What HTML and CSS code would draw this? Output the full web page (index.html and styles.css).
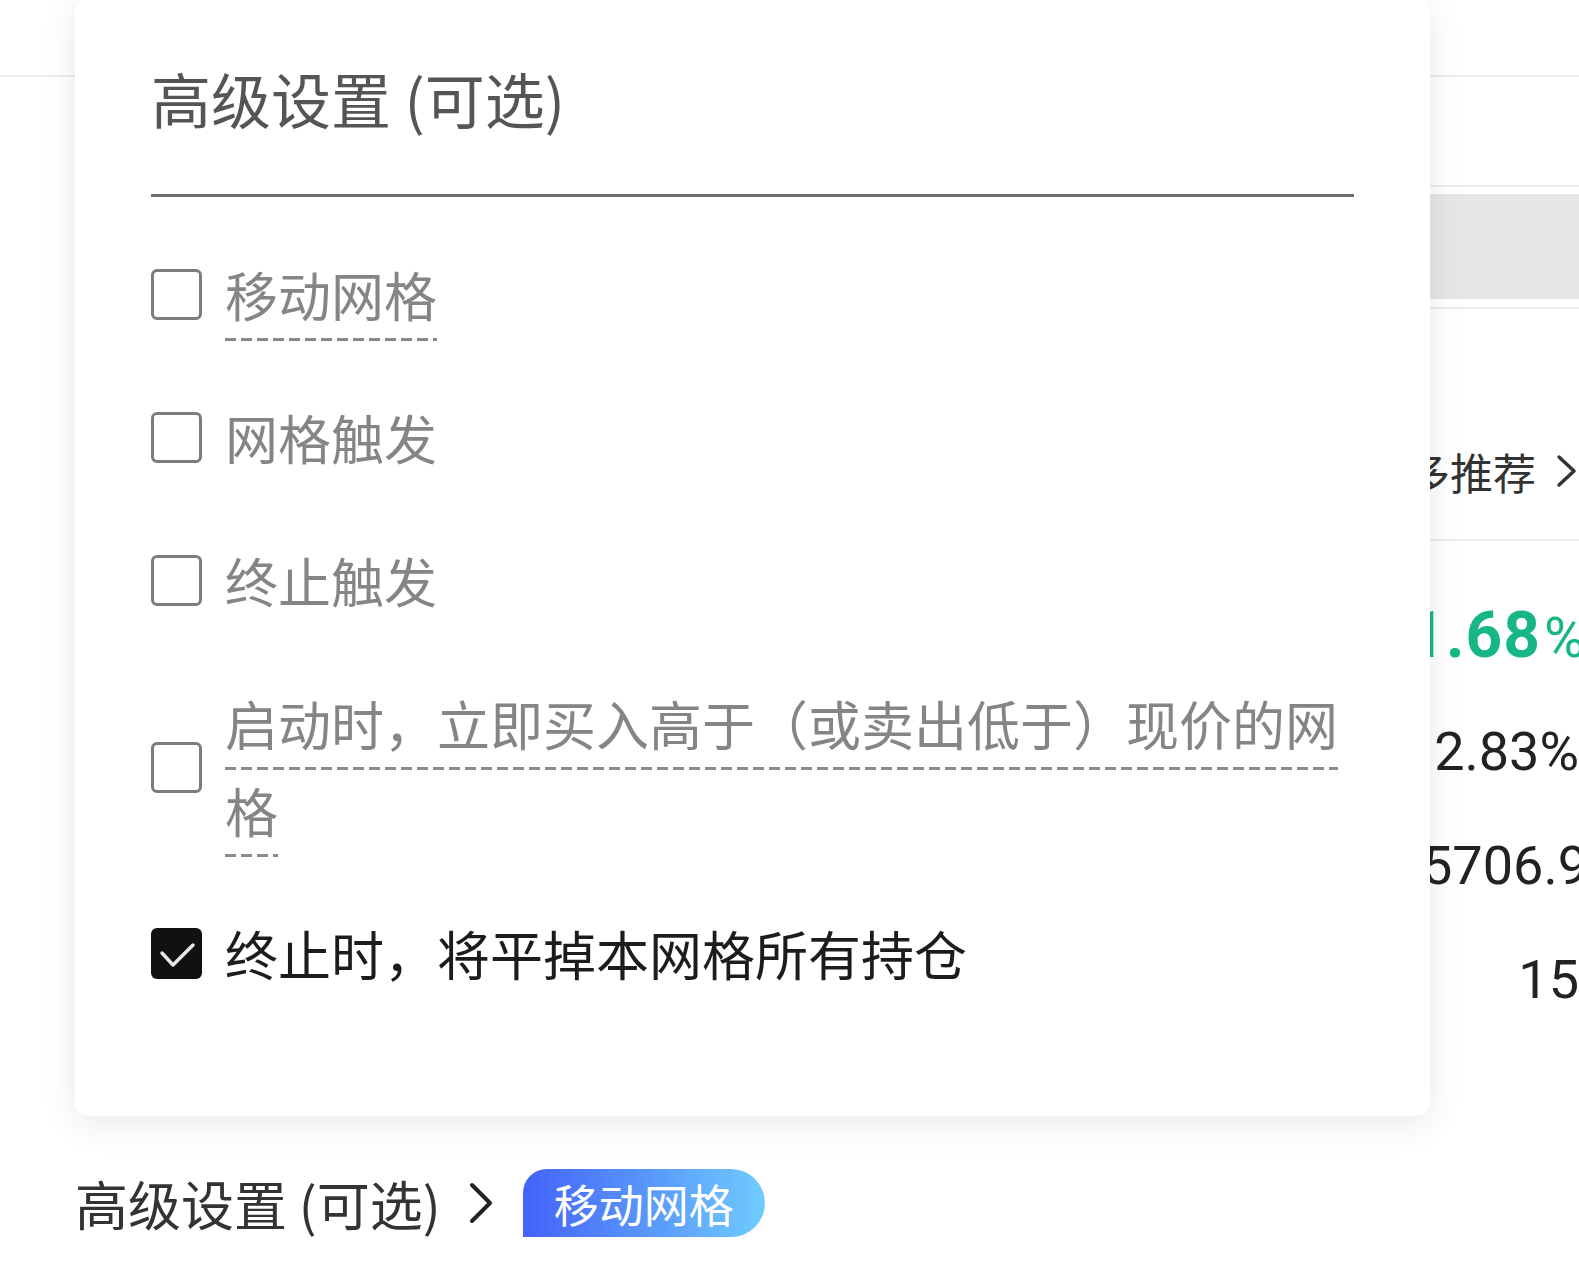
FILE: index.html
```html
<!DOCTYPE html>
<html lang="zh-CN">
<head>
    <meta charset="UTF-8">
    <meta name="viewport" content="width=device-width, initial-scale=1.0">
    <title>网格交易 - 高级设置</title>
    <link rel="stylesheet" href="styles.css">
</head>
<body>
<div class="app">
    <header class="topbar"></header>

    <div class="layout">
        <main class="form">
            <div class="form-body"></div>
            <div class="adv-row">
                <span class="adv-title">高级设置 (可选)</span>
                <svg class="chev" width="26" height="44" viewBox="0 0 26 44">
                    <path d="M4 4 L22 22 L4 40" />
                </svg>
                <span class="pill">移动网格</span>
            </div>
        </main>

        <aside class="side">
            <div class="tabs"><div class="tab-on"></div></div>
            <div class="rec">
                <span>更多推荐</span>
                <svg class="chev small" width="22" height="34" viewBox="0 0 22 34">
                    <path d="M3 3 L18 17 L3 31" />
                </svg>
            </div>
            <div class="stat up">1.68<small>%</small></div>
            <div class="stat">2.83%</div>
            <div class="stat cut">5706.9</div>
            <div class="stat">15</div>
        </aside>
    </div>

    <!-- popover over the form -->
    <div class="popover">
        <h2 class="pop-title">高级设置 (可选)</h2>
        <ul class="opts">
            <li class="opt">
                <span class="box"></span>
                <span class="txt"><span class="dash">移动网格</span></span>
            </li>
            <li class="opt">
                <span class="box"></span>
                <span class="txt">网格触发</span>
            </li>
            <li class="opt">
                <span class="box"></span>
                <span class="txt">终止触发</span>
            </li>
            <li class="opt">
                <span class="box"></span>
                <span class="txt"><span class="dash">启动时，立即买入高于（或卖出低于）现价的网格</span></span>
            </li>
            <li class="opt checked">
                <span class="box on">
                    <svg width="51" height="51" viewBox="0 0 51 51">
                        <path d="M11 25 L22 37 L42 17" />
                    </svg>
                </span>
                <span class="txt">终止时，将平掉本网格所有持仓</span>
            </li>
        </ul>
    </div>
</div>
</body>
</html>
```

FILE: styles.css
```css
body {
    margin: 0;
    background-color: #fff;
    font-family: "Noto Sans CJK SC", "Noto Sans", sans-serif;
}
.app {
    position: relative;
    width: 1579px;
    height: 1280px;
    overflow: hidden;
}
.topbar {
    height: 75px;
    border-bottom: 2px solid #eeeeee;
}
.layout {
    display: grid;
    grid-template-columns: 1fr 200px;
}

/* left: form under the popover */
.form {
    padding-left: 75px;
}
.form-body {
    height: 1092px;
}
.adv-row {
    display: flex;
    align-items: center;
}
.adv-title {
    font-size: 53px;
    line-height: 1;
    color: #333;
    margin-right: 27px;
}
.chev {
    flex: none;
}
.chev path {
    fill: none;
    stroke: #222;
    stroke-width: 4;
    stroke-linecap: round;
    stroke-linejoin: round;
}
.chev.small path {
    stroke-width: 3.5;
    stroke: #333;
}
.pill {
    display: flex;
    align-items: center;
    height: 68px;
    margin-left: 29px;
    padding: 0 31px;
    font-size: 45px;
    color: #fff;
    border-radius: 24px 34px 34px 0;
    background: linear-gradient(90deg, #4462f9 0%, #5a9bfb 55%, #70ccfd 100%);
}

/* right column */
.side {
    display: flex;
    flex-direction: column;
    text-align: right;
    color: #222;
}
.tabs {
    margin-top: 108px;
    padding: 7px 0 8px;
    border-top: 2px solid #ececec;
    border-bottom: 2px solid #ececec;
}
.tab-on {
    height: 105px;
    background-color: #e6e6e6;
}
.rec {
    display: flex;
    justify-content: flex-end;
    align-items: center;
    gap: 20px;
    padding: 132px 1px 38px 0;
    line-height: 60px;
    font-size: 43px;
    color: #333;
    border-bottom: 2px solid #eeeeee;
    white-space: nowrap;
}
.stat {
    font-family: Roboto, "Liberation Sans", sans-serif;
    font-size: 54px;
    line-height: 114px;
    white-space: nowrap;
}
.rec + .stat {
    margin-top: 38px;
}
.stat.up {
    color: #16b687;
    font-size: 64px;
    font-weight: 700;
    letter-spacing: 1px;
    margin-right: -6px;
}
.stat.up small {
    font-size: 56px;
    font-weight: 400;
    letter-spacing: 0;
    margin-left: 3px;
}
.stat.cut {
    margin-right: -9px;
}

/* popover */
.popover {
    position: absolute;
    left: 75px;
    top: -2px;
    width: 1355px;
    height: 1118px;
    box-sizing: border-box;
    padding: 60px 76px 0;
    background-color: #fff;
    border-radius: 14px;
    box-shadow: 0 8px 36px rgba(0, 0, 0, 0.09);
}
.pop-title {
    margin: 0;
    padding-bottom: 56px;
    font-size: 60px;
    line-height: 80px;
    font-weight: 400;
    color: #555;
    border-bottom: 3px solid #6f6f6f;
}
.opts {
    list-style: none;
    margin: 0;
    padding: 54px 0 0;
    display: flex;
    flex-direction: column;
    gap: 56px;
}
.opt {
    display: flex;
    align-items: center;
    gap: 23px;
    font-size: 53px;
    line-height: 87px;
    color: #858585;
}
.opt.checked {
    color: #1c1c1c;
}
.box {
    flex: none;
    width: 51px;
    height: 51px;
    box-sizing: border-box;
    border: 3px solid #7c7c7c;
    border-radius: 6px;
}
.box.on {
    border: none;
    background-color: #111;
}
.box.on svg {
    display: block;
}
.box.on path {
    fill: none;
    stroke: #e6e6e6;
    stroke-width: 3.5;
    stroke-linecap: round;
    stroke-linejoin: round;
}
.txt {
    flex: 1;
    min-width: 0;
}
.dash {
    padding-bottom: 9px;
    background-image: linear-gradient(90deg, #8a8a8a 11px, transparent 11px);
    background-size: 16px 3px;
    background-repeat: repeat-x;
    background-position: 0 100%;
    -webkit-box-decoration-break: clone;
    box-decoration-break: clone;
}
```
